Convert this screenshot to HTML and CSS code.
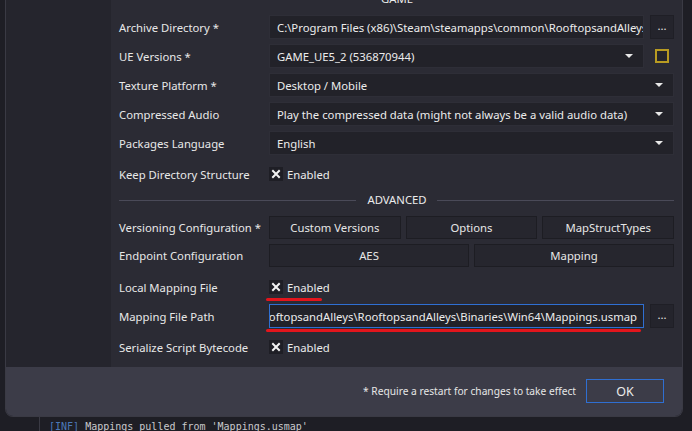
FILE: index.html
```html
<!DOCTYPE html>
<html>
<head>
<meta charset="utf-8">
<link rel="stylesheet" href="styles.css">
</head>
<body>
<div class="dialog">
  <div class="body">
    <aside class="side"></aside>
    <main class="main">
      <div class="sep sep-game"><span class="sep-line"></span><span class="sep-text">GAME</span><span class="sep-line"></span></div>

      <div class="row r-first">
        <span class="label">Archive Directory *</span>
        <div class="ctl">
          <div class="input"><span class="val">C:\Program Files (x86)\Steam\steamapps\common\RooftopsandAlleys\RooftopsandAlleys</span></div>
          <div class="dots">...</div>
        </div>
      </div>

      <div class="row">
        <span class="label">UE Versions *</span>
        <div class="ctl">
          <div class="input select"><span class="val">GAME_UE5_2 (536870944)</span><span class="arrow"></span></div>
          <div class="cell"><span class="gold-box"></span></div>
        </div>
      </div>

      <div class="row">
        <span class="label">Texture Platform *</span>
        <div class="ctl">
          <div class="input select"><span class="val">Desktop / Mobile</span><span class="arrow"></span></div>
        </div>
      </div>

      <div class="row">
        <span class="label">Compressed Audio</span>
        <div class="ctl">
          <div class="input select"><span class="val">Play the compressed data (might not always be a valid audio data)</span><span class="arrow"></span></div>
        </div>
      </div>

      <div class="row">
        <span class="label">Packages Language</span>
        <div class="ctl">
          <div class="input select"><span class="val">English</span><span class="arrow"></span></div>
        </div>
      </div>

      <div class="row check-row r-keep">
        <span class="label">Keep Directory Structure</span>
        <div class="ctl">
          <span class="xbox"><svg width="14" height="14" viewBox="0 0 14 14"><path d="M4 4L10 10M10 4L4 10" stroke="#f2f2f2" stroke-width="2" stroke-linecap="square"/></svg></span>
          <span class="check-text">Enabled</span>
        </div>
      </div>

      <div class="sep sep-adv"><span class="sep-line"></span><span class="sep-text">ADVANCED</span><span class="sep-line"></span></div>

      <div class="row btn-row r-vers">
        <span class="label">Versioning Configuration *</span>
        <div class="ctl btns3">
          <div class="btn">Custom Versions</div>
          <div class="btn">Options</div>
          <div class="btn">MapStructTypes</div>
        </div>
      </div>

      <div class="row btn-row">
        <span class="label">Endpoint Configuration</span>
        <div class="ctl btns2">
          <div class="btn">AES</div>
          <div class="btn">Mapping</div>
        </div>
      </div>

      <div class="row check-row r-local">
        <span class="label">Local Mapping File</span>
        <div class="ctl">
          <span class="xbox"><svg width="14" height="14" viewBox="0 0 14 14"><path d="M4 4L10 10M10 4L4 10" stroke="#f2f2f2" stroke-width="2" stroke-linecap="square"/></svg></span>
          <span class="check-text">Enabled</span>
        </div>
        <span class="redline red-short"></span>
      </div>

      <div class="row r-path">
        <span class="label">Mapping File Path</span>
        <div class="ctl">
          <div class="input focused end"><span class="val">C:\Program Files (x86)\Steam\steamapps\common\RooftopsandAlleys\RooftopsandAlleys\Binaries\Win64\Mappings.usmap</span></div>
          <div class="dots">...</div>
        </div>
        <span class="redline red-long"></span>
      </div>

      <div class="row check-row r-serial">
        <span class="label">Serialize Script Bytecode</span>
        <div class="ctl">
          <span class="xbox"><svg width="14" height="14" viewBox="0 0 14 14"><path d="M4 4L10 10M10 4L4 10" stroke="#f2f2f2" stroke-width="2" stroke-linecap="square"/></svg></span>
          <span class="check-text">Enabled</span>
        </div>
      </div>
    </main>
  </div>
  <footer class="footer">
    <span class="note">* Require a restart for changes to take effect</span>
    <div class="ok">OK</div>
  </footer>
</div>
<div class="log"><span class="tag">[INF]</span> Mappings pulled from 'Mappings.usmap'</div>
</body>
</html>
```

FILE: styles.css
```css
* { box-sizing: border-box; }
html, body {
  margin: 0;
  padding: 0;
  width: 692px;
  height: 431px;
  overflow: hidden;
  background: #1e1e25;
  font-family: "Noto Sans", "Open Sans", sans-serif;
  font-size: 11.3px;
  color: #e6e6e6;
}
.dialog {
  margin: -30px 0 0 5px;
  width: 678px;
  height: 447px;
  border: 1px solid #3a3a44;
  border-top: none;
  border-radius: 0 0 8px 8px;
  overflow: hidden;
  display: flex;
  flex-direction: column;
}
.body {
  flex: 1;
  display: flex;
  min-height: 0;
}
.side {
  flex: none;
  width: 105px;
  background: #25252d;
}
.main {
  flex: 1;
  min-width: 0;
  background: #2b2b34;
  padding: 22px 8px 0 8px;
  display: flex;
  flex-direction: column;
}
.sep {
  height: 14px;
  display: flex;
  align-items: center;
}
.sep-line {
  flex: 1;
  height: 1px;
  background: #4a4a58;
}
.sep-text {
  padding: 0 10px 0 11px;
  color: #ececec;
  line-height: 14px;
}
.sep-adv { margin-top: 5px; }
.row {
  position: relative;
  display: flex;
  align-items: center;
  height: 24px;
  margin-top: 5px;
}
.r-first { margin-top: 9px; }
.label {
  width: 150px;
  flex: none;
  white-space: nowrap;
  color: #e8e8e8;
}
.ctl {
  flex: 1;
  display: flex;
  align-items: center;
  gap: 6px;
  height: 100%;
  min-width: 0;
}
.input {
  flex: 1;
  min-width: 0;
  height: 24px;
  background: #222229;
  border: 1px solid #2e2e37;
  display: flex;
  align-items: center;
  padding: 0 8px 0 7px;
  overflow: hidden;
  white-space: nowrap;
  color: #ececec;
}
.input .val {
  flex: none;
  white-space: nowrap;
}
.input.select { justify-content: space-between; }
.arrow {
  flex: none;
  width: 0;
  height: 0;
  border-left: 4px solid transparent;
  border-right: 4px solid transparent;
  border-top: 4px solid #e8e8e8;
  margin-right: 2px;
}
.input.end {
  justify-content: flex-end;
  padding: 0 6px 0 2px;
}
.input.focused {
  border: 1px solid #2f6fd2;
}
.dots {
  flex: none;
  width: 24px;
  height: 24px;
  background: #24242c;
  border: 1px solid #1f1f26;
  display: flex;
  align-items: center;
  justify-content: center;
  line-height: 1;
  padding-bottom: 3px;
  color: #e6e6e6;
}
.cell {
  flex: none;
  width: 24px;
  height: 24px;
  display: flex;
  align-items: center;
  justify-content: center;
}
.gold-box {
  width: 14px;
  height: 14px;
  border: 2px solid #b89b22;
  background: #25252c;
}
.check-row { height: 28px; }
.r-keep { margin-top: 5px; }
.r-local { margin-top: 6px; }
.r-path { margin-top: 3px; }
.r-serial { margin-top: 5px; }
.xbox {
  width: 14px;
  height: 14px;
  background: #1e1e25;
  display: flex;
  flex: none;
}
.check-text {
  margin-left: -2px;
  color: #ececec;
}
.btn-row { height: 23px; }
.r-vers { margin-top: 9px; }
.btns3, .btns2 { gap: 5px; }
.btn {
  flex: 1;
  height: 23px;
  background: #26262e;
  border: 1px solid #1d1d23;
  display: flex;
  align-items: center;
  justify-content: center;
  color: #e6e6e6;
}
.redline {
  position: absolute;
  left: 147px;
  top: 25px;
  height: 3px;
  background: #e3151c;
  border-radius: 2px;
}
.red-short { width: 56px; }
.red-long { width: 375px; }
.footer {
  height: 49px;
  flex: none;
  background: #3c3c48;
  display: flex;
  align-items: center;
  justify-content: flex-end;
  padding: 0 18px 1px 0;
}
.note {
  color: #e6e6e6;
  font-size: 10.2px;
  margin-right: 10px;
}
.ok {
  width: 78px;
  height: 24px;
  border: 1px solid #2f6fd2;
  display: flex;
  align-items: center;
  justify-content: center;
  color: #ececec;
  font-size: 12.5px;
}
.log {
  margin: 0 0 0 39px;
  height: 20px;
  border-left: 1px solid #3a3a44;
  padding: 4px 0 0 9px;
  font-family: "DejaVu Sans Mono", "Liberation Mono", monospace;
  font-size: 10px;
  color: #c9c9cc;
  white-space: nowrap;
}
.tag { color: #4c78b8; }
```
